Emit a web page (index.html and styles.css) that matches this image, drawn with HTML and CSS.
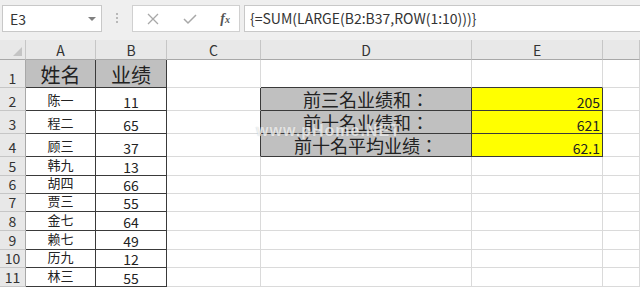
FILE: index.html
```html
<!DOCTYPE html>
<html>
<head>
    <title>Excel LARGE</title>
    <link rel="stylesheet" href="styles.css">
</head>
<body>

    <div class="toolbar">
        <div class="namebox">
            <span>E3</span>
            <span class="caret"></span>
        </div>
        <div class="dots"><i></i><i></i><i></i></div>
        <div class="fbuttons">
            <svg width="12" height="12" viewBox="0 0 12 12"><path d="M1 1 L11 11 M11 1 L1 11" stroke="#a8a8a8" stroke-width="1.3" fill="none"/></svg>
            <svg width="14" height="12" viewBox="0 0 14 12"><path d="M1 6 L5 10 L13 2" stroke="#a8a8a8" stroke-width="1.5" fill="none"/></svg>
            <span class="fx">f<small>x</small></span>
        </div>
        <div class="formula">{=SUM(LARGE(B2:B37,ROW(1:10)))}</div>
    </div>

    <div class="sheet">
        <div class="row head">
            <div class="cell corner"><svg width="9" height="9" viewBox="0 0 9 9"><path d="M9 0 L9 9 L0 9 Z" fill="#c4c4c4"/></svg></div>
            <div class="cell">A</div>
            <div class="cell">B</div>
            <div class="cell">C</div>
            <div class="cell">D</div>
            <div class="cell">E</div>
            <div class="cell"></div>
        </div>
        <div class="row r1">
            <div class="cell rh">1</div>
            <div class="cell bd gray title">姓名</div>
            <div class="cell bd gray title">业绩</div>
            <div class="cell"></div>
            <div class="cell bb"></div>
            <div class="cell bb"></div>
            <div class="cell"></div>
        </div>
        <div class="row r2">
            <div class="cell rh">2</div>
            <div class="cell bd name">陈一</div>
            <div class="cell bd num">11</div>
            <div class="cell br"></div>
            <div class="cell bd gray label">前三名业绩和：</div>
            <div class="cell bd yellow val">205</div>
            <div class="cell"></div>
        </div>
        <div class="row r2">
            <div class="cell rh">3</div>
            <div class="cell bd name">程二</div>
            <div class="cell bd num">65</div>
            <div class="cell br"></div>
            <div class="cell bd gray label">前十名业绩和：</div>
            <div class="cell bd yellow val">621</div>
            <div class="cell"></div>
        </div>
        <div class="row r2">
            <div class="cell rh">4</div>
            <div class="cell bd name">顾三</div>
            <div class="cell bd num">37</div>
            <div class="cell br"></div>
            <div class="cell bd gray label">前十名平均业绩：</div>
            <div class="cell bd yellow val">62.1</div>
            <div class="cell"></div>
        </div>
        <div class="row r5">
            <div class="cell rh">5</div>
            <div class="cell bd name">韩九</div>
            <div class="cell bd num">13</div>
            <div class="cell"></div><div class="cell"></div><div class="cell"></div><div class="cell"></div>
        </div>
        <div class="row r6">
            <div class="cell rh">6</div>
            <div class="cell bd name">胡四</div>
            <div class="cell bd num">66</div>
            <div class="cell"></div><div class="cell"></div><div class="cell"></div><div class="cell"></div>
        </div>
        <div class="row r6">
            <div class="cell rh">7</div>
            <div class="cell bd name">贾三</div>
            <div class="cell bd num">55</div>
            <div class="cell"></div><div class="cell"></div><div class="cell"></div><div class="cell"></div>
        </div>
        <div class="row r5">
            <div class="cell rh">8</div>
            <div class="cell bd name">金七</div>
            <div class="cell bd num">64</div>
            <div class="cell"></div><div class="cell"></div><div class="cell"></div><div class="cell"></div>
        </div>
        <div class="row r5">
            <div class="cell rh">9</div>
            <div class="cell bd name">赖七</div>
            <div class="cell bd num">49</div>
            <div class="cell"></div><div class="cell"></div><div class="cell"></div><div class="cell"></div>
        </div>
        <div class="row r6">
            <div class="cell rh">10</div>
            <div class="cell bd name">历九</div>
            <div class="cell bd num">12</div>
            <div class="cell"></div><div class="cell"></div><div class="cell"></div><div class="cell"></div>
        </div>
        <div class="row r5">
            <div class="cell rh">11</div>
            <div class="cell bd name">林三</div>
            <div class="cell bd num">55</div>
            <div class="cell"></div><div class="cell"></div><div class="cell"></div><div class="cell"></div>
        </div>

        <div class="watermark">www.pHome.NET</div>
    </div>

</body>
</html>
```

FILE: styles.css
```css
body {
    margin: 0;
    width: 640px;
    height: 290px;
    overflow: hidden;
    background: #ffffff;
    font-family: "Noto Sans CJK SC", "Liberation Sans", sans-serif;
    color: #222;
}

/* formula bar */
.toolbar {
    display: flex;
    align-items: flex-start;
    height: 40px;
    padding-top: 5px;
    box-sizing: border-box;
    background: #efefef;
}
.namebox {
    display: flex;
    align-items: center;
    justify-content: space-between;
    width: 100px;
    height: 27px;
    margin-left: 2px;
    padding: 0 5px 0 7px;
    box-sizing: border-box;
    background: #fff;
    border: 1px solid #c8c8c8;
    font-size: 14px;
    color: #333;
}
.caret {
    width: 0;
    height: 0;
    border-left: 4px solid transparent;
    border-right: 4px solid transparent;
    border-top: 4px solid #808080;
}
.dots {
    display: flex;
    flex-direction: column;
    gap: 2px;
    width: 30px;
    align-items: center;
    padding-top: 8px;
}
.dots i {
    width: 2px;
    height: 2px;
    background: #b8b8b8;
}
.fbuttons {
    display: flex;
    align-items: center;
    justify-content: space-between;
    width: 108px;
    height: 27px;
    padding: 0 9px 0 14px;
    box-sizing: border-box;
    background: #fff;
    border: 1px solid #d0d0d0;
}
.fx {
    font-family: "Liberation Serif", serif;
    font-style: italic;
    font-weight: bold;
    font-size: 14px;
    color: #555;
}
.fx small {
    font-size: 10px;
}
.formula {
    flex: 1;
    height: 27px;
    margin-left: 4px;
    margin-right: -4px;
    padding-left: 5px;
    box-sizing: border-box;
    background: #fff;
    border: 1px solid #c8c8c8;
    font-size: 14px;
    line-height: 25px;
    color: #333;
}

/* grid */
.sheet {
    position: relative;
    height: 250px;
    overflow: hidden;
}
.row {
    display: grid;
    grid-template-columns: 26px 70px 71px 94px 211px 131px 37px;
}
.head { height: 20px; }
.r1 { height: 28px; }
.r2 { height: 23px; }
.r5 { height: 19px; }
.r6 { height: 18px; }

.cell {
    display: flex;
    align-items: flex-end;
    justify-content: center;
    box-sizing: border-box;
    border-right: 1px solid #dadada;
    border-bottom: 1px solid #dadada;
    line-height: 1.15;
    white-space: nowrap;
}
.head .cell {
    align-items: center;
    background: #e8e8e8;
    border-right-color: #c6c6c6;
    border-bottom-color: #a8a8a8;
    font-size: 14px;
    color: #333;
    padding-top: 2px;
}
.head .corner {
    align-items: flex-end;
    justify-content: flex-end;
    padding: 0 3px 3px 0;
}
.rh {
    background: #e8e8e8;
    border-right-color: #a8a8a8;
    border-bottom-color: #c6c6c6;
    font-size: 14px;
    color: #333;
    padding-bottom: 1px;
}

.bd {
    border-right-color: #3a3a3a;
    border-bottom-color: #3a3a3a;
}
.bb { border-bottom-color: #3a3a3a; }
.br { border-right-color: #3a3a3a; }
.gray { background: #c0c0c0; }
.yellow { background: #ffff00; }

.title {
    font-size: 20px;
    padding-bottom: 1px;
}
.name {
    font-size: 13px;
    padding-bottom: 2px;
}
.num {
    font-size: 14px;
    padding-bottom: 0;
}
.label {
    font-family: "Noto Sans CJK TC", "Noto Sans CJK SC", sans-serif;
    font-size: 18px;
    line-height: 1.1;
    padding-bottom: 0;
}
.val {
    justify-content: flex-end;
    font-size: 14px;
    padding: 0 2px 0 0;
}

.watermark {
    position: absolute;
    left: 256px;
    top: 82px;
    font-family: "Liberation Sans", sans-serif;
    font-weight: bold;
    font-size: 16px;
    letter-spacing: 1px;
    color: rgba(255, 255, 255, 0.7);
    text-shadow: 0 0 1px rgba(120, 120, 120, 0.4);
}
```
